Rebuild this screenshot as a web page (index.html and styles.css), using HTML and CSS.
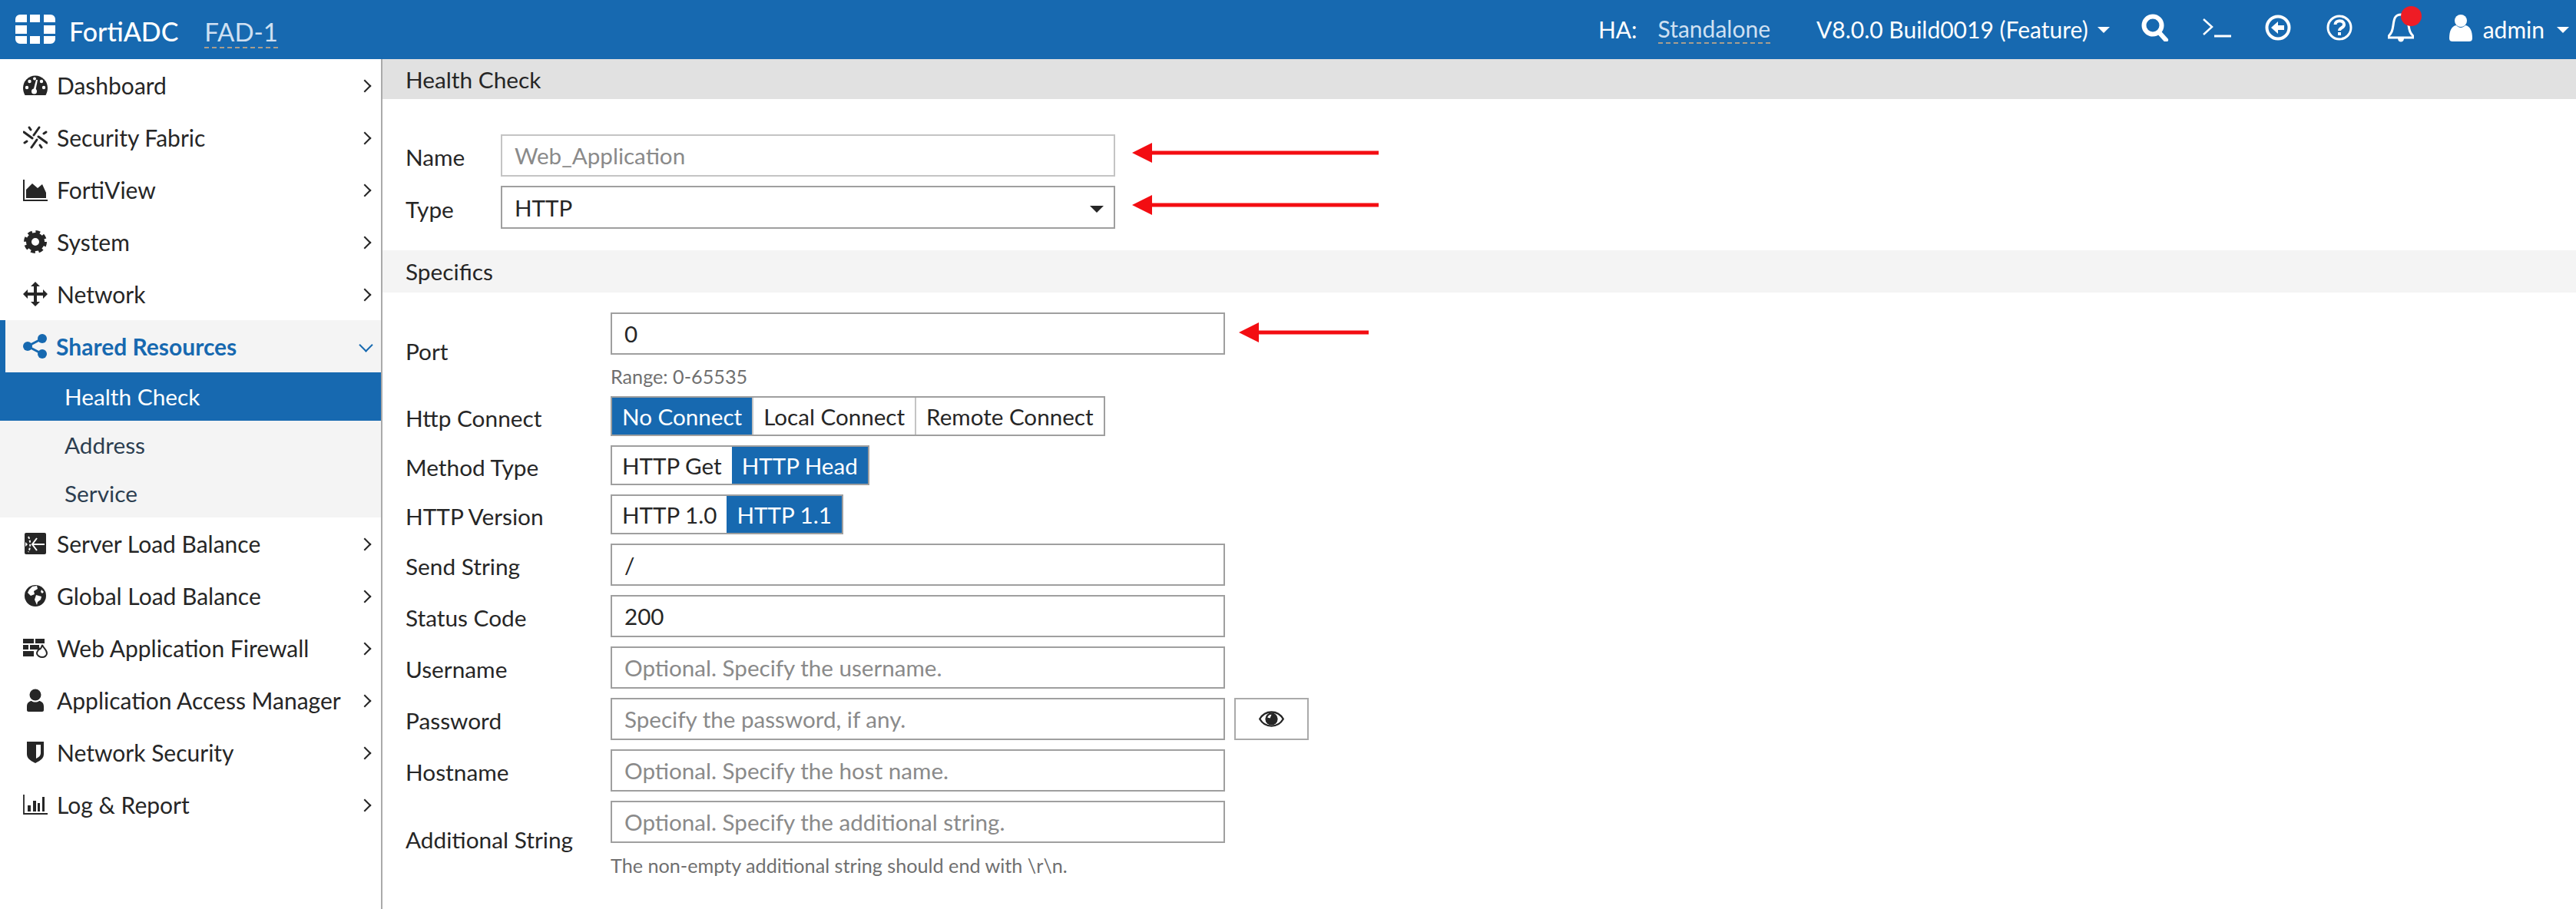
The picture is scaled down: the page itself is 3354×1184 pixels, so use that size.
FILE: index.html
```html
<!DOCTYPE html>
<html lang="en">
<head>
<meta charset="utf-8">
<title>FortiADC</title>
<link rel="stylesheet" href="styles.css">
</head>
<body>
<header class="topbar">
  <svg class="logo" viewBox="0 0 52 38"><path d="M6 0H15V10H0V6A6 6 0 0 1 6 0ZM19 0H32V10H19ZM37 0H46A6 6 0 0 1 52 6V10H37ZM0 14H15V25H0ZM37 14H52V25H37ZM0 28H15V38H6A6 6 0 0 1 0 32ZM19 28H32V38H19ZM37 28H52V32A6 6 0 0 1 46 38H37Z"/></svg>
  <span class="brand">FortiADC</span>
  <span class="device">FAD-1</span>
  <div class="top-right">
    <span class="ha">HA:</span>
    <span class="standalone">Standalone</span>
    <span class="version">V8.0.0 Build0019 (Feature)</span>
    <i class="caret"></i>
    <svg class="ticon t-search" viewBox="0 0 36 36"><circle cx="15" cy="15" r="11.5" fill="none" stroke="#fff" stroke-width="6"/><path d="M23 24L32 34" stroke="#fff" stroke-width="6" stroke-linecap="round"/></svg>
    <svg class="ticon t-prompt" viewBox="0 0 38 30"><path d="M2 4L13 14L2 24" fill="none" stroke="#fff" stroke-width="2.5"/><path d="M16 26H38" stroke="#fff" stroke-width="3"/></svg>
    <svg class="ticon t-back" viewBox="0 0 34 34"><circle cx="17" cy="17" r="14.5" fill="none" stroke="#fff" stroke-width="4"/><path d="M8 17L17 9V14H25V20H17V25Z" fill="#fff"/></svg>
    <svg class="ticon t-help" viewBox="0 0 34 34"><circle cx="17" cy="17" r="15" fill="none" stroke="#fff" stroke-width="3"/><path d="M11.500 13C11.500 6.500 23 6.500 23 13C23 17.500 17 17 17 21" fill="none" stroke="#fff" stroke-width="4"/><rect x="15" y="23" width="4" height="4" fill="#fff"/></svg>
    <span class="bell">
      <svg class="ticon t-bell" viewBox="0 0 34 40"><path d="M17 3C9 3 8 9 7 17C6 24 5 27 1 31V33H33V31C29 27 28 24 27 17C26 9 25 3 17 3Z" fill="none" stroke="#fff" stroke-width="3"/><path d="M13 34C13 40 21 40 21 34Z" fill="#fff"/></svg>
      <i class="dot"></i>
    </span>
    <svg class="ticon t-user" viewBox="0 0 30 36"><circle cx="15" cy="9" r="8" fill="#fff"/><path d="M0 32C0 22 3 16 9 15C13 19 17 19 21 15C27 16 30 22 30 32C30 35 28 36 26 36H4C2 36 0 35 0 32Z" fill="#fff"/></svg>
    <span class="admin">admin</span>
    <i class="caret caret-end"></i>
  </div>
</header>

<div class="layout">
  <nav class="sidebar">
    <a class="nav-item">
      <svg class="nicon" viewBox="0 0 32 32"><path d="M2.500 29C1 26 0 23 0 19.500A16 16 0 0 1 32 19.500C32 23 31 26 29.500 29Z"/><g fill="#fff"><circle cx="5" cy="19" r="2.200"/><circle cx="8.500" cy="11" r="2.200"/><circle cx="24" cy="11" r="2.200"/><circle cx="27" cy="19" r="2.200"/><circle cx="15" cy="7.500" r="2"/><circle cx="14.500" cy="24" r="3.500"/><path d="M17 9L19 9L16.500 22L13.500 22Z"/></g></svg>
      <span class="nav-label">Dashboard</span><i class="chev"></i>
    </a>
    <a class="nav-item">
      <svg class="nicon" viewBox="0 0 32 32"><g stroke="#262626" stroke-width="3" stroke-linecap="round" fill="none"><path d="M14 13L21 3"/><path d="M18 19L11 29"/><path d="M1 9L12 17"/><path d="M20 15L31 23"/><path d="M8 3L10 6"/><path d="M24 29L22 26"/><path d="M27 11L30 9"/><path d="M2 23L5 21"/></g></svg>
      <span class="nav-label">Security Fabric</span><i class="chev"></i>
    </a>
    <a class="nav-item">
      <svg class="nicon" viewBox="0 0 32 32"><path d="M1 3V30H32" fill="none" stroke="#262626" stroke-width="2"/><path d="M4 27V16L12 8L19 14L25 9L30 20V27Z"/></svg>
      <span class="nav-label">FortiView</span><i class="chev"></i>
    </a>
    <a class="nav-item">
      <svg class="nicon" viewBox="0 0 32 32"><circle cx="16" cy="16" r="8.500" fill="none" stroke="#262626" stroke-width="7"/><circle cx="16" cy="16" r="12.500" fill="none" stroke="#262626" stroke-width="5" stroke-dasharray="5.500 4.320"/></svg>
      <span class="nav-label">System</span><i class="chev"></i>
    </a>
    <a class="nav-item">
      <svg class="nicon" viewBox="0 0 32 32"><path d="M16 0L22 6H18V14H26V10L32 16L26 22V18H18V26H22L16 32L10 26H14V18H6V22L0 16L6 10V14H14V6H10Z"/></svg>
      <span class="nav-label">Network</span><i class="chev"></i>
    </a>
    <a class="nav-item active-group">
      <svg class="nicon" viewBox="0 0 32 32"><g fill="#1769b0"><circle cx="6" cy="16" r="6"/><circle cx="25" cy="6" r="6"/><circle cx="25" cy="26" r="6"/></g><path d="M25 6L6 16L25 26" fill="none" stroke="#1769b0" stroke-width="3"/></svg>
      <span class="nav-label strong">Shared Resources</span><i class="chev chev-down"></i>
    </a>
    <a class="sub-item current">Health Check</a>
    <a class="sub-item">Address</a>
    <a class="sub-item">Service</a>
    <a class="nav-item">
      <svg class="nicon" viewBox="0 0 32 32"><rect x="2" y="2" width="28" height="28" rx="2"/><g fill="none" stroke="#fff" stroke-width="2"><path d="M28 17H13"/><path d="M18 9L12 17L18 25"/><path d="M7 7C10 13 10 21 7 27" stroke-dasharray="3 2"/></g><path d="M3 14L6 17L3 20Z" fill="#fff"/></svg>
      <span class="nav-label">Server Load Balance</span><i class="chev"></i>
    </a>
    <a class="nav-item">
      <svg class="nicon" viewBox="0 0 32 32"><circle cx="16" cy="16" r="14"/><path d="M12 4L18 3L19 7L14 10L15 14L10 16L6 12L8 8ZM17 15L24 17L23 21L19 24L18 28L15 21ZM24 8L27 11L25 13L23 11Z" fill="#fff"/></svg>
      <span class="nav-label">Global Load Balance</span><i class="chev"></i>
    </a>
    <a class="nav-item">
      <svg class="nicon" viewBox="0 0 32 32"><path d="M0 4H14V10H0ZM16 4H28V10H16ZM0 12H7V18H0ZM9 12H21V18H9ZM0 20H14V27H0Z"/><path d="M25 12C26 16 31 18 31 23C31 26 28 28 25 28C22 28 18 26 18 23C18 20 20 19 21 17C22 19 24 16 25 12Z" fill="none" stroke="#262626" stroke-width="2"/></svg>
      <span class="nav-label">Web Application Firewall</span><i class="chev"></i>
    </a>
    <a class="nav-item">
      <svg class="nicon" viewBox="0 0 32 32"><circle cx="16" cy="9" r="7.500"/><path d="M5 29V24C5 19 9 17 11 17C14 19 18 19 21 17C23 17 27 19 27 24V29C27 30 26 31 25 31H7C6 31 5 30 5 29Z"/></svg>
      <span class="nav-label">Application Access Manager</span><i class="chev"></i>
    </a>
    <a class="nav-item">
      <svg class="nicon" viewBox="0 0 32 32"><path d="M5 2H27V18C27 23 24 26 16 30C8 26 5 23 5 18ZM17 6V24C21 22 23 20 23 17V6Z" fill-rule="evenodd"/></svg>
      <span class="nav-label">Network Security</span><i class="chev"></i>
    </a>
    <a class="nav-item">
      <svg class="nicon" viewBox="0 0 32 32"><path d="M1 3V28H32" fill="none" stroke="#262626" stroke-width="1.800"/><path d="M6 17H10V25H6ZM13 11H17V25H13ZM19 14H22V25H19ZM25 6H28V25H25Z"/></svg>
      <span class="nav-label">Log &amp; Report</span><i class="chev"></i>
    </a>
  </nav>

  <main class="main">
    <h2 class="section-title primary">Health Check</h2>
    <div class="form-block top-block">
      <div class="row">
        <label class="label">Name</label>
        <input class="input muted" placeholder="Web_Application">
      </div>
      <div class="row">
        <label class="label">Type</label>
        <div class="select-wrap">
          <select class="input select"><option>HTTP</option></select>
          <i class="select-caret"></i>
        </div>
      </div>
    </div>

    <h2 class="section-title secondary">Specifics</h2>
    <div class="form-block specifics">
      <div class="row">
        <label class="label">Port</label>
        <div class="field">
          <input class="input" value="0">
          <p class="help range">Range: 0-65535</p>
        </div>
      </div>
      <div class="row">
        <label class="label">Http Connect</label>
        <div class="segments">
          <span class="seg on">No Connect</span><span class="seg">Local Connect</span><span class="seg">Remote Connect</span>
        </div>
      </div>
      <div class="row">
        <label class="label">Method Type</label>
        <div class="segments">
          <span class="seg">HTTP Get</span><span class="seg on">HTTP Head</span>
        </div>
      </div>
      <div class="row">
        <label class="label">HTTP Version</label>
        <div class="segments">
          <span class="seg">HTTP 1.0</span><span class="seg on">HTTP 1.1</span>
        </div>
      </div>
      <div class="row">
        <label class="label">Send String</label>
        <input class="input" value="/">
      </div>
      <div class="row">
        <label class="label">Status Code</label>
        <input class="input" value="200">
      </div>
      <div class="row">
        <label class="label">Username</label>
        <input class="input" placeholder="Optional. Specify the username.">
      </div>
      <div class="row">
        <label class="label">Password</label>
        <input class="input" placeholder="Specify the password, if any.">
        <button class="eye-btn" type="button" aria-label="Show password">
          <svg class="eye" viewBox="0 0 34 22"><path d="M1 11C5 4 11 1.500 17 1.500C23 1.500 29 4 33 11C29 18 23 20.500 17 20.500C11 20.500 5 18 1 11Z" fill="none" stroke="#262626" stroke-width="2.500"/><circle cx="17" cy="11" r="8.500" fill="#262626"/><path d="M17 5A6 6 0 0 0 11.500 9L15 10Z" fill="#fff"/></svg>
        </button>
      </div>
      <div class="row">
        <label class="label">Hostname</label>
        <input class="input" placeholder="Optional. Specify the host name.">
      </div>
      <div class="row">
        <label class="label">Additional String</label>
        <div class="field">
          <input class="input" placeholder="Optional. Specify the additional string.">
          <p class="help note">The non-empty additional string should end with \r\n.</p>
        </div>
      </div>
    </div>
  </main>
</div>

<svg class="arrow arrow-name" viewBox="0 0 321 26"><path d="M0 13L26 0V10.500H321V15.500H26V26Z"/></svg>
<svg class="arrow arrow-type" viewBox="0 0 321 26"><path d="M0 13L26 0V10.500H321V15.500H26V26Z"/></svg>
<svg class="arrow arrow-port" viewBox="0 0 169 26"><path d="M0 13L26 0V10.500H169V15.500H26V26Z"/></svg>
</body>
</html>
```
FILE: styles.css
```css
* { box-sizing: border-box; }
html, body { margin: 0; padding: 0; height: 100%; }
body {
  width: 3354px;
  height: 1184px;
  overflow: hidden;
  display: flex;
  flex-direction: column;
  font-family: Lato, "Liberation Sans", sans-serif;
  font-size: 29.800px;
  color: #262626;
  background: #fff;
}

/* top bar */
.topbar {
  height: 77px;
  flex: none;
  display: flex;
  align-items: center;
  background: #1769b0;
  color: #fff;
  padding-left: 20px;
}
.logo { width: 52px; height: 38px; fill: #fff; margin-top: -1px; }
.brand { margin-left: 18px; margin-top: 4px; font-size: 34px; font-weight: 500; }
.device {
  margin-left: 34px;
  margin-top: 6px;
  font-size: 33px;
  color: #cfe0f2;
  line-height: 40px;
  border-bottom: 2px dashed #a89e8e;
}
.top-right { margin-left: auto; display: flex; align-items: center; height: 100%; }
.ha { margin-top: -1px; font-size: 30px; }
.standalone {
  margin-left: 27px;
  color: #cfe0f2;
  line-height: 36px;
  font-size: 30px;
  margin-top: -1px;
  border-bottom: 2px dashed #a89e8e;
}
.version { margin-left: 60px; margin-top: -1px; font-size: 30px; }
.caret {
  width: 0;
  height: 0;
  margin-left: 12px;
  border-left: 8px solid transparent;
  border-right: 8px solid transparent;
  border-top: 8px solid #fff;
}
.ticon { display: block; flex: none; margin-bottom: 5px; }
.t-search { width: 36px; height: 36px; margin-left: 41px; }
.t-prompt { width: 38px; height: 30px; margin-left: 43px; }
.t-back { width: 34px; height: 34px; margin-left: 44px; }
.t-help { width: 34px; height: 34px; margin-left: 46px; }
.bell { position: relative; margin-left: 46px; display: block; }
.t-bell { width: 34px; height: 40px; }
.dot {
  position: absolute;
  top: -8px;
  left: 17px;
  width: 27px;
  height: 26px;
  border-radius: 50%;
  background: #ee1c25;
}
.t-user { width: 30px; height: 36px; margin-left: 46px; }
.admin { margin-left: 14px; margin-top: -2px; font-size: 30px; }
.caret-end { margin-left: 16px; margin-right: 9px; }

/* layout */
.layout { flex: 1; display: flex; min-height: 0; }
.sidebar {
  width: 498px;
  flex: none;
  border-right: 2px solid #aaa;
  background: #fff;
}
.nav-item {
  height: 68px;
  display: flex;
  align-items: center;
  padding-left: 30px;
  padding-right: 13px;
  font-size: 30px;
  color: #262626;
}
.nicon { width: 32px; height: 32px; flex: none; fill: #262626; }
.nav-label { margin-left: 12px; flex: 1; white-space: nowrap; }
.chev {
  width: 12px;
  height: 12px;
  border-top: 2px solid #262626;
  border-right: 2px solid #262626;
  transform: rotate(45deg);
  margin-right: 2px;
  margin-top: 2px;
  flex: none;
}
.active-group {
  background: #f4f4f4;
  box-shadow: inset 7px 0 0 #1769b0;
}
.strong { color: #1769b0; font-weight: 700; margin-left: 11px; }
.chev-down {
  border-color: #1769b0;
  transform: rotate(135deg);
  margin-right: 0;
  margin-top: -4px;
  width: 13px;
  height: 13px;
}
.sub-item {
  height: 63px;
  display: flex;
  align-items: center;
  padding-left: 84px;
  background: #f4f4f4;
  color: #2c3e50;
}
.sub-item.current { background: #1769b0; color: #fff; }

/* main */
.main { flex: 1; min-width: 0; }
.section-title {
  margin: 0;
  display: flex;
  align-items: center;
  padding-left: 30px;
  font-size: 29.800px;
  font-weight: 400;
}
.section-title.primary { height: 52px; background: #e1e1e1; }
.section-title.secondary { height: 55px; background: #f4f4f4; }

.form-block { padding-left: 30px; display: flex; flex-direction: column; gap: 12px; }
.top-block { padding-top: 46px; padding-bottom: 28px; --label-w: 124px; }
.specifics { padding-top: 26px; --label-w: 267px; }

.row { display: flex; align-items: center; }
.label {
  width: var(--label-w);
  flex: none;
  padding-top: 4px;
  white-space: nowrap;
}
.input {
  display: block;
  width: 800px;
  height: 55px;
  border: 2px solid #9f9f9f;
  border-radius: 0;
  background: #fff;
  padding: 0 16px;
  font: inherit;
  font-size: 29.600px;
  color: #262626;
  outline: none;
}
.input.muted { border-color: #c4c4c4; }
.input::placeholder { color: #8a8a8a; opacity: 1; }
.input.muted::placeholder { color: #8a8a8a; }
.select-wrap { position: relative; }
.select { appearance: none; height: 56px; }
.select-caret {
  position: absolute;
  right: 15px;
  top: 26px;
  width: 0;
  height: 0;
  border-left: 9px solid transparent;
  border-right: 9px solid transparent;
  border-top: 9px solid #262626;
}
.field { display: flex; flex-direction: column; }
.help { margin: 0; font-size: 25.200px; color: #6f6f6f; }
.range { height: 42px; display: flex; align-items: center; padding-top: 14px; }
.note { height: 42px; display: flex; align-items: center; padding-top: 16px; }

.segments { display: flex; height: 52px; border: 2px solid #9f9f9f; font-size: 29.600px; }
.seg {
  display: flex;
  align-items: center;
  padding: 0 13px;
  white-space: nowrap;
  border-left: 2px solid #c4c4c4;
}
.seg:first-child { border-left: 0; }
.seg.on { background: #1769b0; color: #fff; border-left: 0; }

.eye-btn {
  width: 97px;
  height: 55px;
  margin-left: 12px;
  padding: 0;
  border: 2px solid #aaa;
  background: #fff;
  display: flex;
  align-items: center;
  justify-content: center;
}
.eye { width: 33px; height: 21px; display: block; }

/* annotations laid over the screenshot */
.arrow { position: absolute; height: 26px; fill: #f30d12; }
.arrow-name { left: 1474px; top: 186px; width: 321px; }
.arrow-type { left: 1474px; top: 254px; width: 321px; }
.arrow-port { left: 1613px; top: 420px; width: 169px; }
```
